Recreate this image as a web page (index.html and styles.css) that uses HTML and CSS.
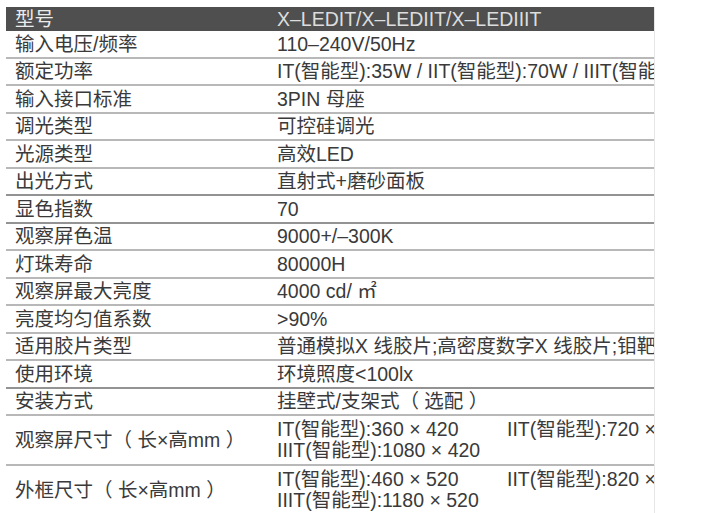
FILE: index.html
```html
<!DOCTYPE html>
<html lang="zh-CN">
<head>
<meta charset="utf-8">
<title>X-LED 参数</title>
<link rel="stylesheet" href="styles.css">
</head>
<body>
<div class="spec">
  <div class="row head"><div class="k">型号</div><div class="v">X–LEDIT/X–LEDIIT/X–LEDIIIT</div></div>
  <div class="row"><div class="k">输入电压/频率</div><div class="v">110–240V/50Hz</div></div>
  <div class="row"><div class="k">额定功率</div><div class="v">IT(智能型):35W / IIT(智能型):70W / IIIT(智能</div></div>
  <div class="row"><div class="k">输入接口标准</div><div class="v">3PIN 母座</div></div>
  <div class="row"><div class="k">调光类型</div><div class="v">可控硅调光</div></div>
  <div class="row"><div class="k">光源类型</div><div class="v">高效LED</div></div>
  <div class="row dark"><div class="k">出光方式</div><div class="v">直射式+磨砂面板</div></div>
  <div class="row dark"><div class="k">显色指数</div><div class="v">70</div></div>
  <div class="row"><div class="k">观察屏色温</div><div class="v">9000+/–300K</div></div>
  <div class="row"><div class="k">灯珠寿命</div><div class="v">80000H</div></div>
  <div class="row"><div class="k">观察屏最大亮度</div><div class="v">4000 cd/ ㎡</div></div>
  <div class="row"><div class="k">亮度均匀值系数</div><div class="v">&gt;90%</div></div>
  <div class="row"><div class="k">适用胶片类型</div><div class="v">普通模拟X 线胶片;高密度数字X 线胶片;钼靶</div></div>
  <div class="row dark"><div class="k">使用环境</div><div class="v">环境照度&lt;100lx</div></div>
  <div class="row"><div class="k">安装方式</div><div class="v">挂壁式/支架式（ 选配 ）</div></div>
  <div class="row tall"><div class="k">观察屏尺寸（ 长×高mm ）</div><div class="v"><div class="line"><span class="col1">IT(智能型):360 × 420</span><span>IIT(智能型):720 ×</span></div><div class="line">IIIT(智能型):1080 × 420</div></div></div>
  <div class="row tall last"><div class="k">外框尺寸（ 长×高mm ）</div><div class="v"><div class="line"><span class="col1">IT(智能型):460 × 520</span><span>IIT(智能型):820 ×</span></div><div class="line">IIIT(智能型):1180 × 520</div></div></div>
</div>
</body>
</html>
```
FILE: styles.css
```css
html, body {
  margin: 0;
  padding: 0;
  background: #ffffff;
}
body {
  font-family: "Liberation Sans", "Noto Sans CJK SC", sans-serif;
  font-size: 19.5px;
  color: #3a3a3a;
}
.spec {
  margin: 7px 0 0 6px;
  width: 649px;
  border-right: 1px solid #e6e6e6;
  box-sizing: border-box;
}
.row {
  display: grid;
  grid-template-columns: 264px 1fr;
  height: 27.5px;
  box-sizing: border-box;
  border-bottom: 2px solid #b8b8b8;
  align-items: center;
}
.row.dark {
  border-bottom-color: #939393;
}
.row.head {
  height: 24px;
  background: #4f4f4f;
  border-bottom: none;
  color: #ececec;
}
.row.head .v {
  color: #dddddd;
}
.row.tall {
  height: 50px;
}
.row.last {
  height: 48px;
  border-bottom: none;
}
.k {
  padding-left: 9px;
  white-space: nowrap;
  line-height: 24px;
}
.v {
  padding-left: 7px;
  white-space: nowrap;
  overflow: hidden;
  line-height: 24px;
}
.line {
  line-height: 21px;
}
.col1 {
  display: inline-block;
  width: 230px;
}
```
